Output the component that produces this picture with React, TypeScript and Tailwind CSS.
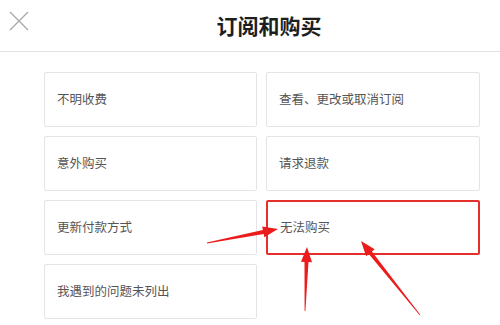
const ITEMS = ['不明收费', '查看、更改或取消订阅', '意外购买', '请求退款', '更新付款方式', '无法购买', '我遇到的问题未列出'];

type Pt = [number, number];

// tapered arrow: thin tail, widening shaft, triangular head
function arrowPoints(tail: Pt, tip: Pt): string {
  const [x1, y1] = tail;
  const [x2, y2] = tip;
  const len = Math.hypot(x2 - x1, y2 - y1);
  const ux = (x2 - x1) / len;
  const uy = (y2 - y1) / len;
  const nx = -uy;
  const ny = ux;
  const head = 15;
  const bx = x2 - ux * head;
  const by = y2 - uy * head;
  const p = (x: number, y: number, w: number): string => `${(x + nx * w).toFixed(1)},${(y + ny * w).toFixed(1)}`;
  return [
    p(x1, y1, 0.4),
    p(bx, by, 2),
    p(bx, by, 5.5),
    `${x2},${y2}`,
    p(bx, by, -5.5),
    p(bx, by, -2),
    p(x1, y1, -0.4),
  ].join(' ');
}

const ARROWS: [Pt, Pt][] = [
  [[207, 243], [278, 229]],
  [[305, 311], [307, 247]],
  [[420, 315], [361, 241]],
];

export default function App() {
  return (
    <div className="relative h-[325px] w-[500px] overflow-hidden bg-white" style={{ fontFamily: '"Noto Sans CJK SC", "Noto Sans", sans-serif' }}>
      <div className="relative flex h-[52px] items-center justify-center border-b border-[#e2e2e2]">
        <svg className="absolute left-[9px] top-[11px]" width={20} height={20} viewBox="0 0 20 20">
          <path d="M1 1 L19 19 M19 1 L1 19" stroke="#a8a8a8" strokeWidth={1.3} fill="none" />
        </svg>
        <h1 className="ml-[38px] text-[21px] font-bold text-[#1e1e1e]">订阅和购买</h1>
      </div>

      <div className="grid grid-cols-[213px_214px] gap-x-[9px] gap-y-[9px] pl-[44px] pt-[20px]">
        {ITEMS.map((t) => (
          <div
            key={t}
            className={
              'flex h-[55px] items-center rounded-[2px] px-[12px] text-[12.5px] text-[#555] ' +
              (t === '无法购买' ? 'border-2 border-[#e3302a]' : 'border border-[#e4e4e4]')
            }
          >
            {t}
          </div>
        ))}
      </div>

      <svg className="pointer-events-none absolute left-0 top-0" width={500} height={325}>
        {ARROWS.map(([a, b], i) => (
          <polygon key={i} points={arrowPoints(a, b)} fill="#ec1c1c" />
        ))}
      </svg>
    </div>
  );
}
